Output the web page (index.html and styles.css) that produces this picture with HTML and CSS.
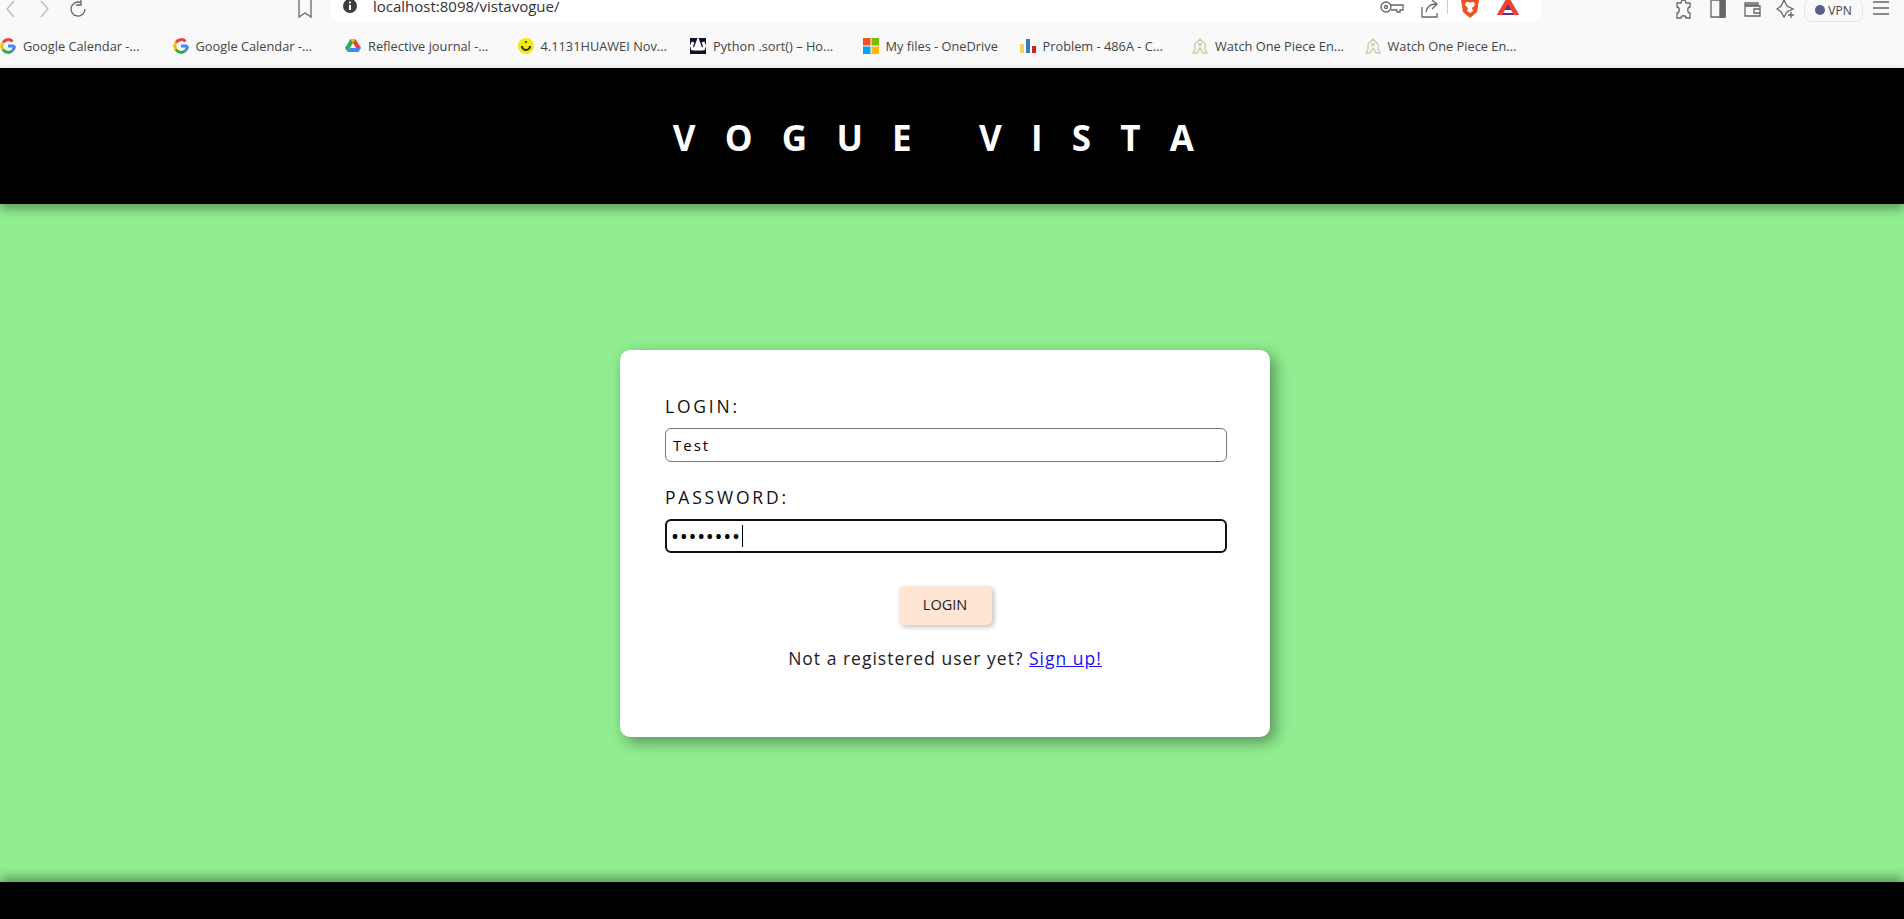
FILE: index.html
```html
<!DOCTYPE html>
<html lang="en">
<head>
    <meta charset="UTF-8">
    <meta name="viewport" content="width=device-width, initial-scale=1.0">
    <title>Vogue Vista</title>
    <link rel="stylesheet" href="styles.css">
</head>
<body>

    <!-- browser toolbar -->
    <div class="toolbar">
        <div class="nav-icons">
            <svg class="icon faint" viewBox="0 0 20 20"><path d="M13 1 6 9l7 8"/></svg>
            <svg class="icon faint" viewBox="0 0 20 20"><path d="m7 1 7 8-7 8"/></svg>
            <svg class="icon reload" viewBox="0 0 20 20"><path d="M16 9a7 7 0 1 1-4-6.300M12 0v5h-5"/></svg>
        </div>
        <svg class="icon bookmark" viewBox="0 0 20 20"><path d="M4 0v17l6-4 6 4V0"/></svg>
        <div class="address">
            <svg class="info" viewBox="0 0 16 16"><circle cx="8" cy="6" r="7" fill="#3c3c3c"/><path d="M7 5h2v5H7zM7 1.500h2v2H7z" fill="#fff"/></svg>
            <span class="url">localhost:8098/vistavogue/</span>
            <div class="address-right">
                <svg class="icon key" viewBox="0 0 24 20"><circle cx="6" cy="7" r="5"/><circle cx="6" cy="7" r="1.500"/><path d="M11 5h12v5h-3v2h-3v-2h-6"/></svg>
                <svg class="icon" viewBox="0 0 20 20"><path d="M2 7v10h15v-4M6 12c1-6 5-8 10-8M12 0l5 4-5 5"/></svg>
                <span class="divider"></span>
                <svg class="logo" viewBox="0 0 20 22"><path d="M4 0h12l3 4-2 12-7 6-7-6L1 4z" fill="#f2501f"/><path d="M6 6h3l1 1 1-1h3l1 3-3 3 1 3-3 2-3-2 1-3-3-3z" fill="#fff"/></svg>
                <svg class="logo" viewBox="0 0 22 22"><path d="M11 0 0 19h22z" fill="#662d91"/><path d="M11 0 0 19h5L11 8l6 11h5z" fill="#f2402b"/><path d="M8 14h6l2 3H6z" fill="#fff"/></svg>
            </div>
        </div>
        <div class="tool-icons">
            <svg class="icon" viewBox="0 0 20 20"><path d="M3 3h4c0-4 5-4 5 0h4v4c-3 0-3 6 0 6v5h-4c0-3-5-3-5 0H3v-5c3 0 3-6 0-6z"/></svg>
            <svg class="icon" viewBox="0 0 20 20"><path d="M3 0h14v17H3z"/><path class="solid" d="M12 0h5v17h-5z"/></svg>
            <svg class="icon" viewBox="0 0 20 20"><path d="M3 3h13v2H3zM3 3v13h15V6H3M12 9h6v4h-6z"/></svg>
            <svg class="icon" viewBox="0 0 20 20"><path d="M8 0 11 6l6 3-6 3-3 5-3-5-4-3 4-3zM15 12v6M12 15h6"/></svg>
            <div class="vpn"><span class="vpn-dot"></span>VPN</div>
            <svg class="icon menu" viewBox="0 0 20 20"><path d="M2 2h16M2 8h16M2 14h16"/></svg>
        </div>
    </div>

    <!-- bookmarks -->
    <div class="bookmarks">
        <a class="mark">
            <svg class="fav" viewBox="0 0 16 16"><path d="M14.500 8H8" stroke="#4285f4"/><path d="M12.500 3.500A6 6 0 0 0 3 4.500" stroke="#ea4335"/><path d="M3 4.500a6 6 0 0 0 0 7" stroke="#fbbc05"/><path d="M3 11.500a6 6 0 0 0 9.500 1" stroke="#34a853"/><path d="M12.500 12.500A6 6 0 0 0 14.500 8" stroke="#4285f4"/></svg>
            <span>Google Calendar -...</span>
        </a>
        <a class="mark">
            <svg class="fav" viewBox="0 0 16 16"><path d="M14.500 8H8" stroke="#4285f4"/><path d="M12.500 3.500A6 6 0 0 0 3 4.500" stroke="#ea4335"/><path d="M3 4.500a6 6 0 0 0 0 7" stroke="#fbbc05"/><path d="M3 11.500a6 6 0 0 0 9.500 1" stroke="#34a853"/><path d="M12.500 12.500A6 6 0 0 0 14.500 8" stroke="#4285f4"/></svg>
            <span>Google Calendar -...</span>
        </a>
        <a class="mark">
            <svg class="fav" viewBox="0 0 16 16"><path d="M5.500 1h5L8 6 5.500 1z" fill="#fbbc05"/><path d="M5.500 1 0 10l2.500 4L8 5z" fill="#34a853"/><path d="M10.500 1 16 10h-5L8 5z" fill="#ea4335"/><path d="M2.500 14h11l2.500-4H5z" fill="#4285f4"/></svg>
            <span>Reflective journal -...</span>
        </a>
        <a class="mark">
            <svg class="fav" viewBox="0 0 16 16"><circle cx="8" cy="8" r="8" fill="#f5e80c"/><path d="M12 8a4 4 0 1 1-8 0" fill="none" stroke="#222" stroke-width="2"/><circle cx="8" cy="4" r="1" fill="#222"/></svg>
            <span>4.1131HUAWEI Nov...</span>
        </a>
        <a class="mark">
            <svg class="fav" viewBox="0 0 16 16"><path d="M0 0h16v16H0z" fill="#0d1030"/><path d="M8 3 5 11h2l1-3 1 3h2zM3 4 1.500 8 3 12M13 4l1.500 4-1.500 4" fill="none" stroke="#fff"/></svg>
            <span>Python .sort() – Ho...</span>
        </a>
        <a class="mark short">
            <svg class="fav" viewBox="0 0 16 16"><path d="M0 0h7.500v7.500H0z" fill="#f25022"/><path d="M8.500 0H16v7.500H8.500z" fill="#7fba00"/><path d="M0 8.500h7.500V16H0z" fill="#00a4ef"/><path d="M8.500 8.500H16V16H8.500z" fill="#ffb900"/></svg>
            <span>My files - OneDrive</span>
        </a>
        <a class="mark">
            <svg class="fav" viewBox="0 0 16 16"><path d="M0 6h4v9H0z" fill="#f5d35c"/><path d="M6 1h4v14H6z" fill="#2f80c2"/><path d="M12 8h4v7h-4z" fill="#c9232d"/></svg>
            <span>Problem - 486A - C...</span>
        </a>
        <a class="mark">
            <svg class="fav" viewBox="0 0 16 16"><path d="M8 1 3 6v5L1 15h4l3-5 3 5h4l-2-4V6z" fill="none" stroke="#d8ccb0" stroke-width="1.500"/><path d="M6 5h4v3H6z" fill="#dcd3bb"/></svg>
            <span>Watch One Piece En...</span>
        </a>
        <a class="mark">
            <svg class="fav" viewBox="0 0 16 16"><path d="M8 1 3 6v5L1 15h4l3-5 3 5h4l-2-4V6z" fill="none" stroke="#d8ccb0" stroke-width="1.500"/><path d="M6 5h4v3H6z" fill="#dcd3bb"/></svg>
            <span>Watch One Piece En...</span>
        </a>
    </div>

    <header class="site-header">
        <h1>VOGUE VISTA</h1>
    </header>

    <div class="content">
        <form class="login-card">
            <label for="login">LOGIN:</label>
            <input id="login" class="field" type="text" value="Test">

            <label for="password">PASSWORD:</label>
            <div class="field field-focus"><span class="dots">••••••••</span><span class="caret"></span></div>

            <button class="login-button" type="button">LOGIN</button>

            <p class="signup">Not a registered user yet? <a href="#">Sign up!</a></p>
        </form>
    </div>

    <footer class="site-footer"></footer>

</body>
</html>
```

FILE: styles.css
```css
body {
    font-family: "Open Sans", Arial, sans-serif;
    background-color: #90ee90;
    margin: 0;
    padding: 0;
    height: 919px;
    display: flex;
    flex-direction: column;
    overflow: hidden;
}

/* browser chrome */
.toolbar {
    height: 24px;
    flex: none;
    display: flex;
    background: #f9f9f9;
    overflow: hidden;
}

.icon {
    width: 20px;
    height: 20px;
    flex: none;
    fill: none;
    stroke: #666;
    stroke-width: 1.3;
}

    .icon.faint {
        stroke: #bbb;
    }

    .icon .solid {
        fill: #666;
    }

    .icon.key {
        width: 24px;
    }

.nav-icons {
    display: flex;
    gap: 13px;
    padding-left: 1px;
    width: 294px;
}

.reload {
    margin-left: 2px;
}

.address {
    width: 1210px;
    margin-left: 16px;
    height: 23px;
    background: #fff;
    border-radius: 0 0 10px 10px;
    display: flex;
    align-items: flex-start;
    box-sizing: border-box;
    padding-left: 11px;
}

.info {
    width: 16px;
    height: 16px;
    flex: none;
}

.url {
    margin-left: 15px;
    margin-top: -1px;
    font-size: 15px;
    line-height: 14px;
    color: #333;
}

.address-right {
    margin-left: auto;
    width: 161px;
    display: flex;
    gap: 16px;
}

.divider {
    width: 1px;
    height: 14px;
    background: #ccc;
    margin: 0 -5px 0 -9px;
}

.logo {
    width: 22px;
    height: 22px;
    margin-top: -4px;
    flex: none;
}

.tool-icons {
    display: flex;
    gap: 14px;
    margin-left: 133px;
}

.vpn {
    width: 59px;
    height: 24px;
    margin-top: -2px;
    margin-left: -6px;
    box-sizing: border-box;
    border: 1px solid #e4e4e4;
    border-radius: 8px;
    font-size: 12px;
    color: #444;
    display: flex;
    align-items: center;
    justify-content: center;
    gap: 3px;
}

.vpn-dot {
    width: 10px;
    height: 10px;
    border-radius: 50%;
    background: #5a5f8c;
}

.menu {
    margin-left: -6px;
}

.bookmarks {
    height: 44px;
    flex: none;
    display: flex;
    align-items: center;
    background: #f9f9f9;
}

.mark {
    width: 172.500px;
    flex: none;
    display: flex;
    align-items: center;
    gap: 7px;
    font-size: 12.800px;
    color: #444;
    white-space: nowrap;
}

    .mark.short {
        width: 157px;
    }

.fav {
    width: 16px;
    height: 16px;
    flex: none;
    fill: none;
    stroke-width: 3;
}

/* page */
.site-header {
    height: 136px;
    flex: none;
    background: #000;
    color: #fff;
    display: flex;
    justify-content: center;
    align-items: center;
    box-shadow: 0 5px 10px rgba(0, 0, 0, 0.35);
    position: relative;
}

    .site-header h1 {
        margin: 3px 8px 0 0;
        font-size: 35px;
        font-weight: 700;
        letter-spacing: 29.200px;
        white-space: pre;
    }

.content {
    flex: 1;
    display: flex;
    justify-content: center;
    align-items: flex-start;
    padding-top: 146px;
    box-sizing: border-box;
}

.login-card {
    width: 650px;
    height: 387px;
    margin-left: -14px;
    box-sizing: border-box;
    background: #fff;
    border-radius: 10px;
    padding: 44px 45px;
    box-shadow: 5px 5px 15px rgba(0, 0, 0, 0.4);
    display: flex;
    flex-direction: column;
}

    .login-card label {
        font-size: 17.500px;
        line-height: 24px;
        font-weight: 400;
        letter-spacing: 2.800px;
        color: #111;
        margin-bottom: 10px;
    }

.field {
    height: 34px;
    box-sizing: border-box;
    width: 562px;
    border: 1px solid #767676;
    border-radius: 6px;
    padding: 0 7px;
    margin: 0 0 23px;
    font-family: inherit;
    font-size: 15px;
    letter-spacing: 2px;
    color: #000;
    background: #fff;
}

.field-focus {
    border: 2px solid #101010;
    padding: 0 5px;
    display: flex;
    align-items: center;
    margin-bottom: 33px;
}

.dots {
    letter-spacing: 2.700px;
    font-size: 16px;
    font-weight: 700;
}

.caret {
    width: 1px;
    height: 22px;
    background: #000;
}

.login-button {
    align-self: center;
    width: 93px;
    height: 39px;
    border: none;
    border-radius: 5px;
    background: #ffe5d4;
    color: #222;
    font-family: inherit;
    font-size: 14.500px;
    font-weight: 400;
    padding: 0 0 2px;
    box-shadow: 2px 2px 5px rgba(0, 0, 0, 0.25);
}

.signup {
    margin: 21px 0 0;
    text-align: center;
    font-size: 17.500px;
    font-weight: 400;
    letter-spacing: 1px;
    color: #222;
}

    .signup a {
        color: #1a0dff;
    }

.site-footer {
    height: 37px;
    flex: none;
    background: #000;
    box-shadow: 0 -5px 10px rgba(0, 0, 0, 0.35);
}
```
